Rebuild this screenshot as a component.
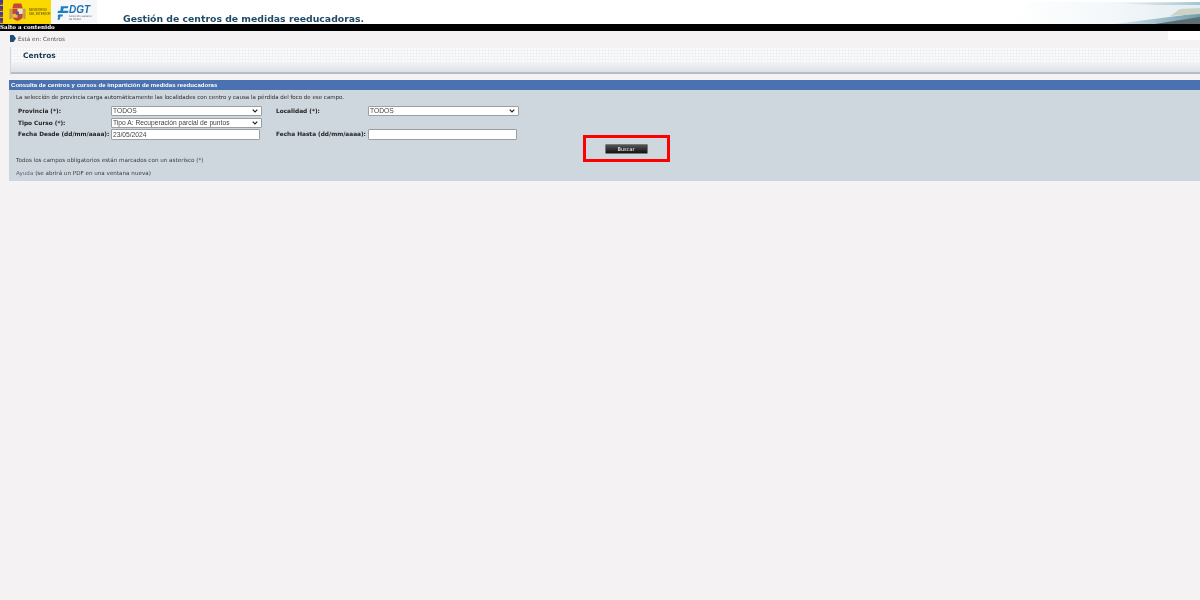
<div class="page">
  <header class="top">
    <div class="flag"></div>
    <div class="ministry">
      <svg class="crest" viewBox="0 0 18 19" aria-hidden="true">
        <rect x="0.5" y="6" width="2.500" height="11" fill="#b89a60" />
        <rect x="15" y="6" width="2.500" height="11" fill="#b89a60" />
        <path d="M5 0.500h8l1.500 5h-11z" fill="#c4453a" />
        <path d="M3.500 6h11v8c0 3-3 4-5.500 5-2.500-1-5.500-2-5.500-5z" fill="#c4453a" />
        <rect x="9" y="6" width="5.500" height="5.500" fill="#efe0c4" />
        <rect x="3.500" y="11.500" width="5.500" height="4" fill="#e6bc3e" />
        <rect x="7.500" y="9" width="3" height="3.500" fill="#4a5a9a" />
      </svg>
      <div class="min-text"><span>MINISTERIO</span><span>DEL INTERIOR</span></div>
    </div>
    <div class="dgt">
      <svg class="dgt-mark" viewBox="0 0 14 16" aria-hidden="true">
        <path d="M4.500 0h9l-1 2.600H7.800L7 5.500h6.500l-1 2.600H0.500l0.800-2.600H4zM1.500 9.800h5.500l-0.600 2.200H4l-0.900 4H0.600l0.900-4H0.500z" fill="#1a7fc0" />
      </svg>
      <div class="dgt-text">
        <span class="dgt-name">DGT</span>
        <span class="dgt-sub">Dirección General<br />de Tráfico</span>
      </div>
    </div>
    <h1>Gestión de centros de medidas reeducadoras.</h1>
    <svg class="swoosh" viewBox="0 0 300 24" preserveAspectRatio="none" aria-hidden="true">
      <defs>
        <linearGradient id="fade" x1="0" x2="1" y1="0" y2="0">
          <stop offset="0" stop-color="#fff" />
          <stop offset="0.5" stop-color="#f4f8fa" />
          <stop offset="1" stop-color="#e4edf1" />
        </linearGradient>
        <linearGradient id="streak" x1="0" x2="1" y1="0" y2="0">
          <stop offset="0" stop-color="#eef4f5" />
          <stop offset="1" stop-color="#a4c6d0" />
        </linearGradient>
        <linearGradient id="low" x1="0" x2="1" y1="0" y2="0">
          <stop offset="0" stop-color="#d8e6ec" />
          <stop offset="1" stop-color="#6f9cad" />
        </linearGradient>
      </defs>
      <polygon points="110,24 130,2 300,2 300,24" fill="url(#fade)" />
      <polygon points="215,3 300,2 300,5 255,5" fill="url(#streak)" />
      <polygon points="215,24 300,13 300,24" fill="url(#low)" />
      <polygon points="255,24 300,17 300,24" fill="#5c6e72" />
      <polygon points="280,9 300,8 300,14 270,16" fill="#cdd2c8" />
    </svg>
  </header>
  <div class="skip">Salto a contenido</div>

  <div class="crumbs">
    <svg class="arrow" viewBox="0 0 6 7" aria-hidden="true"><path d="M0 0h3.500L6 3.500 3.500 7H0z" fill="#1f4f78" /></svg>
    <span>Está en: Centros</span>
    <div class="white-tab"></div>
  </div>

  <section class="title-box">
    <h2>Centros</h2>
  </section>

  <section class="panel">
    <h3>Consulta de centros y cursos de impartición de medidas reeducadoras</h3>
    <div class="body">
      <p class="intro">La selección de provincia carga automáticamente las localidades con centro y causa la pérdida del foco de ese campo.</p>
      <form class="grid">
        <label for="prov">Provincia (*):</label>
        <select id="prov"><option>TODOS</option></select>
        <label for="loc">Localidad (*):</label>
        <select id="loc"><option>TODOS</option></select>

        <label for="tipo">Tipo Curso (*):</label>
        <select id="tipo"><option>Tipo A: Recuperación parcial de puntos</option></select>
        <span></span><span></span>

        <label for="desde">Fecha Desde (dd/mm/aaaa):</label>
        <input id="desde" value="23/05/2024" />
        <label for="hasta">Fecha Hasta (dd/mm/aaaa):</label>
        <input id="hasta" />
      </form>
      <div class="search-wrap">
        <div class="highlight"><button type="button">Buscar</button></div>
      </div>
      <p class="req">Todos los campos obligatorios están marcados con un asterisco (*)</p>
      <p class="help"><span class="link">Ayuda</span> (se abrirá un PDF en una ventana nueva)</p>
    </div>
  </section>
</div>

<style>
  :global(body) { margin: 0; background: #f4f2f3; }
  .page {
    width: 1200px; height: 600px; overflow: hidden; background: #f4f2f3;
    font-family: "DejaVu Sans", Verdana, sans-serif; color: #333;
    filter: blur(0.3px);
  }
  .top { height: 24px; background: #fff; display: flex; position: relative; overflow: hidden; }
  .flag { width: 3px; height: 24px; background: repeating-linear-gradient(#3a3f8f 0 3px, #8a3f5a 3px 5px, #d8b820 5px 6px); }
  .ministry {
    width: 48px; height: 24px; background: #fbd900; display: flex; align-items: center; gap: 3px; padding-left: 6px;
    box-sizing: border-box;
  }
  .crest { width: 17px; height: 18px; flex: none; }
  .min-text { display: flex; flex-direction: column; font: 3.100px/4px "Liberation Sans", sans-serif; color: #4a3c08; white-space: nowrap; }
  .dgt {
    width: 46px; height: 23px; background: #f6f7f9; display: flex; align-items: flex-start; gap: 1px; padding: 5px 0 0 6px;
    box-sizing: border-box;
  }
  .dgt-mark { width: 12px; height: 16px; flex: none; }
  .dgt-text { display: flex; flex-direction: column; margin-left: -1px; }
  .dgt-name { font: italic bold 10px/10px "Liberation Sans", sans-serif; color: #1a6fae; }
  .dgt-sub { font-size: 2.5px; line-height: 3px; color: #557; }
  h1 {
    margin: 13px 0 0 26px; font-size: 9.3px; line-height: 11px; font-weight: bold; color: #1f4a68; white-space: nowrap;
  }
  .swoosh { position: absolute; right: 0; top: 0; width: 300px; height: 24px; }
  .skip { height: 7px; background: #000; color: #fff; font: bold 5.600px/7px "DejaVu Serif", serif; white-space: nowrap; }
  .crumbs {
    height: 16px; display: flex; align-items: center; padding: 0 0 1px 10px; gap: 2px; box-sizing: border-box;
    font-size: 5.700px; color: #555; position: relative;
  }
  .arrow { width: 6px; height: 7px; }
  .white-tab { position: absolute; right: 0; top: 0; width: 32px; height: 9px; background: #fff; }
  .title-box {
    margin-left: 10px; height: 28px; box-sizing: border-box; border-left: 1px solid #d0d6dc;
    background:
      linear-gradient(#f3f1f2, #dde1e7) 0 16px / 100% 9px no-repeat,
      linear-gradient(#b8c2ca, #aeb9c2) 0 25px / 100% 2px no-repeat,
      repeating-linear-gradient(90deg, #eff1f5 0 1px, transparent 1px 3px) 0 1px / 100% 15px no-repeat,
      repeating-linear-gradient(0deg, #eff1f5 0 1px, #fbfbfc 1px 3px) 0 1px / 100% 15px no-repeat,
      #f4f2f3;
  }
  h2 { margin: 0; padding: 4px 0 0 12px; font-size: 7.500px; line-height: 10px; font-weight: bold; color: #1a384f; }
  .panel { margin: 5px 0 0 9px; height: 101px; background: #ced6de; }
  h3 {
    margin: 0; height: 10px; background: #4a72b0; color: #fff; font: bold 6px/10px "Liberation Sans", sans-serif;
    padding-left: 2px; letter-spacing: .06px;
  }
  .body { padding: 0 0 0 7px; position: relative; }
  .intro { margin: 0; padding-top: 4px; font-size: 5.500px; line-height: 7px; color: #2c2c2c; white-space: nowrap; }
  .grid {
    display: grid; grid-template-columns: 93px 165px 92px 152px; grid-template-rows: 12px 11px 12px;
    margin: 4px 0 0 2px; align-items: center;
  }
  label { font-size: 5.800px; font-weight: bold; color: #222; white-space: nowrap; }
  select, input {
    box-sizing: border-box; height: 10px; width: 151px; font: 6.700px/8px "Liberation Sans", sans-serif;
    color: #444; background: #fff; border: 1px solid #9a9fa4; border-radius: 1px; padding: 0 0 0 1px; margin: 0;
  }
  select {
    appearance: none; -webkit-appearance: none;
    background: #fff url("data:image/svg+xml,%3Csvg xmlns='http://www.w3.org/2000/svg' width='6' height='4'%3E%3Cpath d='M.7.7 3 3l2.300-2.300' fill='none' stroke='%23222' stroke-width='1.200'/%3E%3C/svg%3E") no-repeat right 3px center;
  }
  input { width: 149px; height: 11px; }
  .search-wrap { position: absolute; left: 574px; top: 45px; }
  .highlight {
    box-sizing: border-box; width: 87px; height: 27px; border: 3px solid #ff0000;
    display: flex; align-items: center; justify-content: center;
  }
  button {
    width: 43px; height: 10px; padding: 0; margin: 0 0 0 -1px; border: 1px solid #777; border-radius: 1px;
    background: linear-gradient(#555, #111); color: #fff; font: 5px/8px "DejaVu Sans", sans-serif;
  }
  .req, .help { margin: 0; font-size: 5.620px; line-height: 7px; color: #3c3c3c; white-space: nowrap; }
  .req { padding-top: 17px; }
  .help { padding-top: 6px; }
  .link { color: #667; }
</style>
